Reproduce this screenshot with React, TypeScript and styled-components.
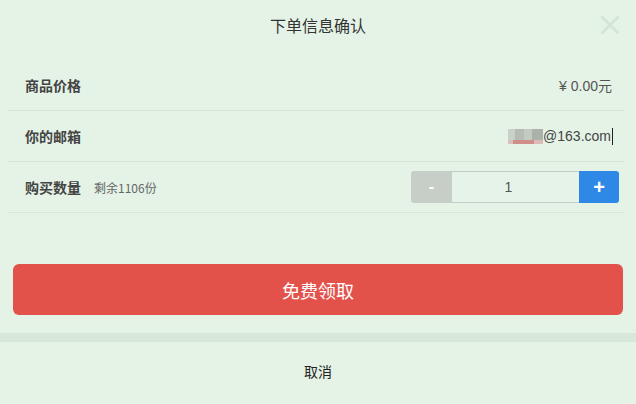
import React from "react";
import styled, { createGlobalStyle } from "styled-components";

const GlobalStyle = createGlobalStyle`
  html, body {
    margin: 0;
    padding: 0;
    background: #e4f3e6;
  }
  body {
    font-family: "Liberation Sans", "Noto Sans CJK SC", sans-serif;
    color: #333;
  }
`;

const Dialog = styled.div`
  width: 636px;
  height: 404px;
  background: #e4f3e6;
  display: flex;
  flex-direction: column;
  overflow: hidden;
`;

const Header = styled.div`
  position: relative;
  height: 50px;
  display: flex;
  align-items: center;
  justify-content: center;
  font-family: "Noto Sans CJK SC", sans-serif;
  font-size: 16px;
  color: #333;
  padding-bottom: 10px;
`;

const CloseBtn = styled.div`
  position: absolute;
  right: 16px;
  top: 15px;
  width: 20px;
  height: 20px;
`;

const List = styled.div`
  margin: 0 12px 0 8px;
`;

const Row = styled.div`
  height: 50px;
  border-bottom: 1px solid #d6e6d8;
  display: flex;
  align-items: center;
  padding: 0 12px 0 17px;
`;

const Label = styled.span`
  font-family: "Noto Sans CJK SC", sans-serif;
  font-weight: bold;
  font-size: 14px;
  color: #444;
`;

const Hint = styled.span`
  font-family: "Noto Sans CJK SC", sans-serif;
  font-size: 12px;
  color: #666;
  margin-left: 13px;
`;

const Value = styled.span`
  margin-left: auto;
  font-family: "Liberation Sans", "Noto Sans CJK SC", sans-serif;
  font-size: 14px;
  color: #555;
`;

const Email = styled.span`
  margin-left: auto;
  display: flex;
  align-items: center;
  font-size: 14px;
  color: #444;
  margin-right: -1px;
`;

const Mosaic = styled.span`
  display: inline-block;
  width: 35px;
  height: 15px;
  background:
    linear-gradient(90deg, #c9d2c9 0 20%, #b4bcb4 20% 45%, #c2cac1 45% 70%, #aab2aa 70% 100%) top / 100% 11px no-repeat,
    linear-gradient(90deg, #d6c0bb 0 15%, #cf8f88 15% 75%, #dcbcb6 75% 100%) bottom / 100% 4px no-repeat;
`;

const Caret = styled.span`
  display: inline-block;
  width: 1px;
  height: 17px;
  background: #222;
  margin-left: 1px;
`;

const Stepper = styled.div`
  margin-left: auto;
  margin-right: -7px;
  display: flex;
  height: 32px;
`;

const StepBtn = styled.button<{ $variant: "minus" | "plus" }>`
  width: ${(p) => (p.$variant === "minus" ? "41px" : "40px")};
  height: 32px;
  border: none;
  padding: 0;
  color: #fff;
  font-family: "Liberation Sans", sans-serif;
  font-weight: bold;
  font-size: ${(p) => (p.$variant === "minus" ? "16px" : "20px")};
  line-height: 32px;
  background: ${(p) => (p.$variant === "minus" ? "#c6cec7" : "#2d89e5")};
  border-radius: ${(p) => (p.$variant === "minus" ? "3px 0 0 3px" : "0 3px 3px 0")};
`;

const CountInput = styled.div`
  width: 127px;
  height: 30px;
  box-sizing: border-box;
  height: 32px;
  padding-right: 14px;
  border: 1px solid #c4cdc5;
  border-left: none;
  border-right: none;
  display: flex;
  align-items: center;
  justify-content: center;
  font-size: 14px;
  color: #555;
  background: #e6f3e8;
`;

const Submit = styled.button`
  margin: 51px 13px 0 13px;
  height: 51px;
  border: none;
  border-radius: 6px;
  background: #e2524b;
  color: #fff;
  font-family: "Noto Sans CJK SC", sans-serif;
  font-size: 18px;
`;

const Band = styled.div`
  margin-top: 18px;
  height: 9px;
  background: #d7e7d9;
`;

const Cancel = styled.div`
  flex: 1;
  display: flex;
  align-items: center;
  justify-content: center;
  padding-bottom: 4px;
  font-family: "Noto Sans CJK SC", sans-serif;
  font-size: 14px;
  color: #222;
`;

export default function App() {
  return (
    <>
      <GlobalStyle />
      <Dialog>
        <Header>
          下单信息确认
          <CloseBtn>
            <svg width="20" height="20" viewBox="0 0 20 20">
              <path d="M2 2 L18 18 M18 2 L2 18" stroke="#d3e6d6" strokeWidth="2.5" strokeLinecap="round" />
            </svg>
          </CloseBtn>
        </Header>
        <List>
          <Row>
            <Label>商品价格</Label>
            <Value>¥ 0.00元</Value>
          </Row>
          <Row>
            <Label>你的邮箱</Label>
            <Email>
              <Mosaic />
              @163.com
              <Caret />
            </Email>
          </Row>
          <Row>
            <Label>购买数量</Label>
            <Hint>剩余1106份</Hint>
            <Stepper>
              <StepBtn $variant="minus">-</StepBtn>
              <CountInput>1</CountInput>
              <StepBtn $variant="plus">+</StepBtn>
            </Stepper>
          </Row>
        </List>
        <Submit>免费领取</Submit>
        <Band />
        <Cancel>取消</Cancel>
      </Dialog>
    </>
  );
}
